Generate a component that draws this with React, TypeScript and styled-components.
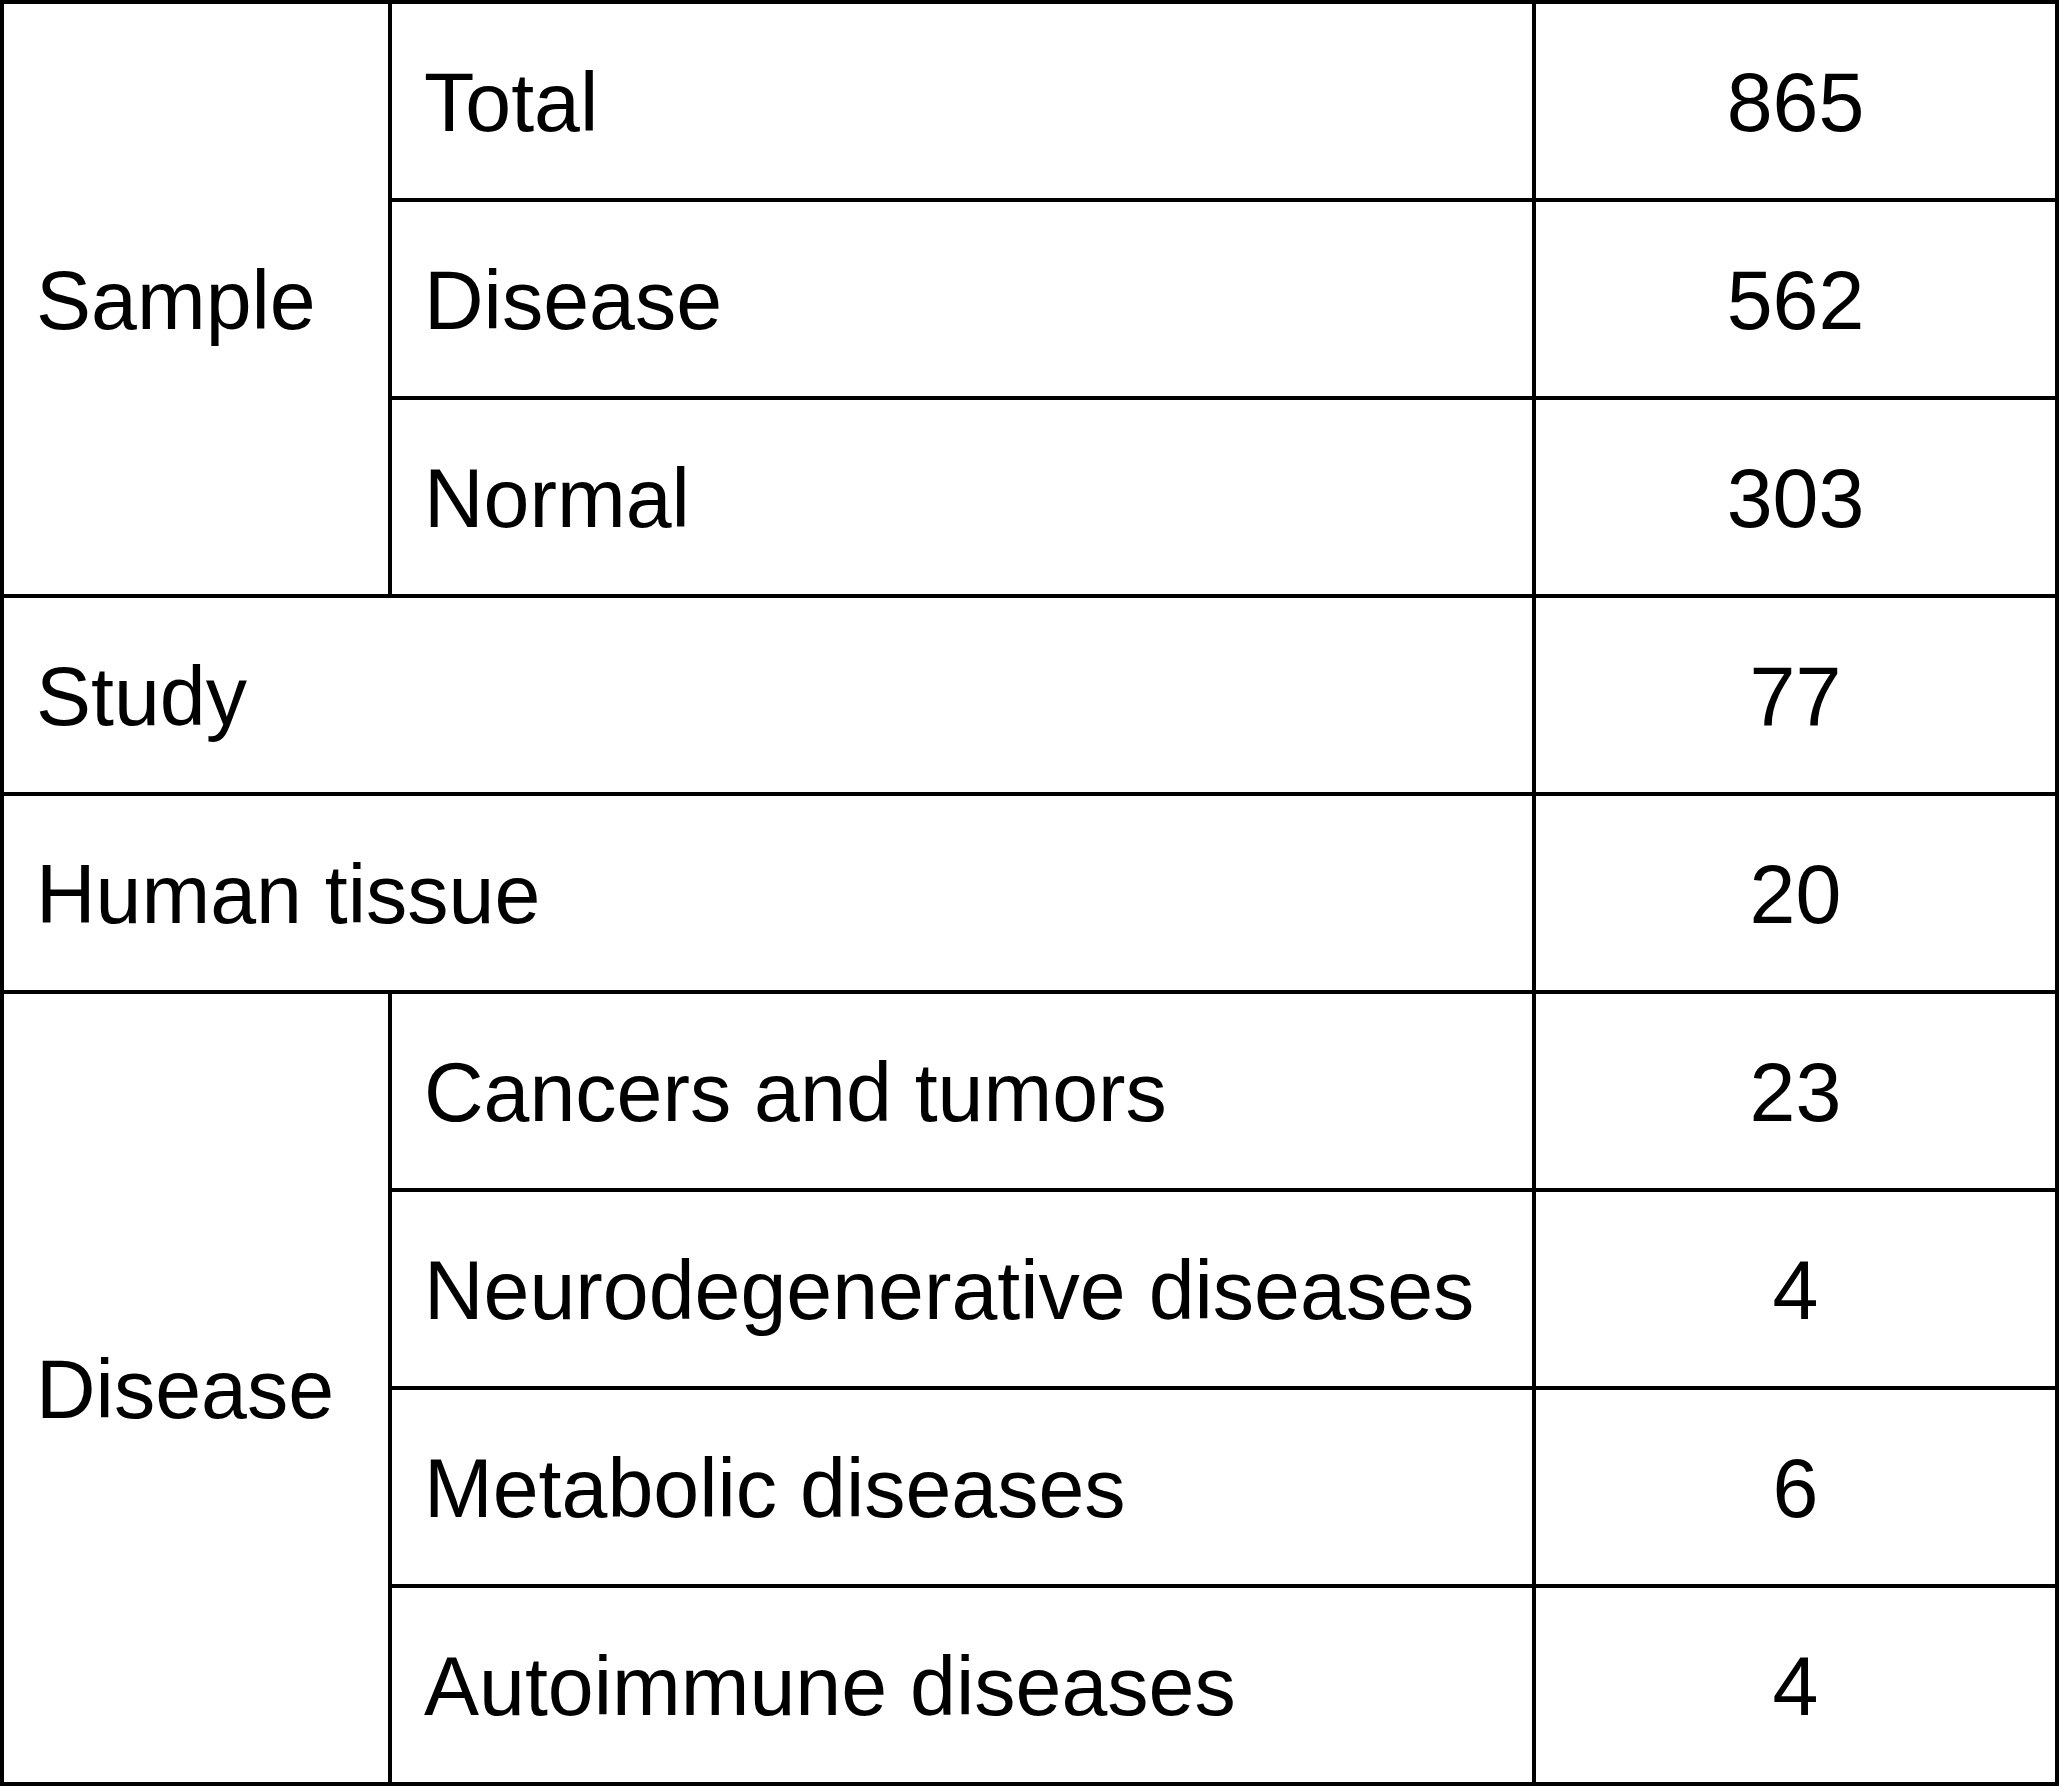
import React from "react";
import styled, { createGlobalStyle } from "styled-components";

const Global = createGlobalStyle`
  html, body {
    margin: 0;
    padding: 0;
    background: #ffffff;
  }
  body {
    font-family: "Liberation Sans", Arial, sans-serif;
    color: #000000;
  }
`;

const Table = styled.div`
  display: grid;
  grid-template-columns: 388px 1144px 523px;
  grid-auto-rows: 198px;
  width: max-content;
  border-top: 4px solid #000;
  border-left: 4px solid #000;
`;

const Cell = styled.div<{ $rows?: number; $cols?: number; $col?: number; $center?: boolean }>`
  box-sizing: border-box;
  border-right: 4px solid #000;
  border-bottom: 4px solid #000;
  grid-row: span ${(p) => p.$rows ?? 1};
  grid-column: ${(p) => (p.$col ? `${p.$col}` : `span ${p.$cols ?? 1}`)};
  display: flex;
  align-items: center;
  justify-content: ${(p) => (p.$center ? "center" : "flex-start")};
  padding: 2px ${(p) => (p.$center ? "0" : "32px")} 0;
  font-size: 82.5px;
  line-height: 1;
  white-space: nowrap;
`;

type Sub = { label: string; value: string };
type Group = { label: string; value?: string; subs?: Sub[] };

const groups: Group[] = [
  {
    label: "Sample",
    subs: [
      { label: "Total", value: "865" },
      { label: "Disease", value: "562" },
      { label: "Normal", value: "303" },
    ],
  },
  { label: "Study", value: "77" },
  { label: "Human tissue", value: "20" },
  {
    label: "Disease",
    subs: [
      { label: "Cancers and tumors", value: "23" },
      { label: "Neurodegenerative diseases", value: "4" },
      { label: "Metabolic diseases", value: "6" },
      { label: "Autoimmune diseases", value: "4" },
    ],
  },
];

export default function App() {
  return (
    <>
      <Global />
      <Table>
        {groups.map((g) =>
          g.subs ? (
            <React.Fragment key={g.label}>
              <Cell $rows={g.subs.length} $col={1}>{g.label}</Cell>
              {g.subs.map((s) => (
                <React.Fragment key={s.label}>
                  <Cell $col={2}>{s.label}</Cell>
                  <Cell $col={3} $center>{s.value}</Cell>
                </React.Fragment>
              ))}
            </React.Fragment>
          ) : (
            <React.Fragment key={g.label}>
              <Cell $cols={2}>{g.label}</Cell>
              <Cell $center>{g.value}</Cell>
            </React.Fragment>
          )
        )}
      </Table>
    </>
  );
}
